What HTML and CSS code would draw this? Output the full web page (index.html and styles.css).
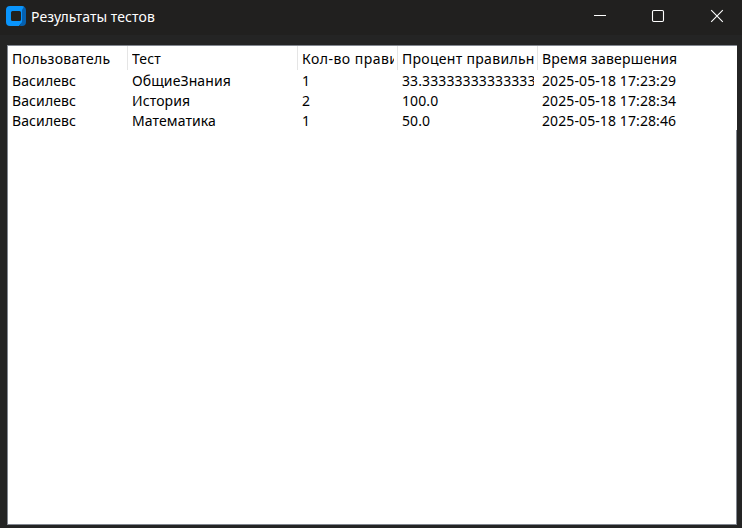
FILE: index.html
```html
<!DOCTYPE html>
<html lang="ru">
<head>
<meta charset="utf-8">
<title>Результаты тестов</title>
<link rel="stylesheet" href="styles.css">
</head>
<body>
<header class="titlebar">
  <svg class="logo" width="20" height="20" viewBox="0 0 20 20">
    <path d="M15 2l3-1.5a4 4 0 0 1 2 3.5v12a4 4 0 0 1-4 4h-2l1-5z" fill="#0560b0"/>
    <path fill-rule="evenodd" d="M4 0h12a4 4 0 0 1 2 .5L16 4v12l-3 4H4a4 4 0 0 1-4-4V4a4 4 0 0 1 4-4zM6.500 5A1.500 1.500 0 0 0 5 6.500v7A1.500 1.500 0 0 0 6.500 15h7a1.500 1.500 0 0 0 1.500-1.500v-7A1.500 1.500 0 0 0 13.500 5z" fill="#0a94fb"/>
  </svg>
  <h1 class="title">Результаты тестов</h1>
  <div class="controls">
    <svg width="58" height="32" viewBox="0 0 58 32"><path d="M23 15.5h12" stroke="#fff"/></svg>
    <svg width="58" height="32" viewBox="0 0 58 32"><rect x="23.5" y="10.5" width="11" height="11" rx="1.2" fill="none" stroke="#fff" stroke-width="1.1"/></svg>
    <svg width="58" height="32" viewBox="0 0 58 32"><path d="M24.2 10.2l11.6 11.6M35.8 10.2L24.2 21.8" stroke="#fff" stroke-width="1.1"/></svg>
  </div>
</header>
<main class="tree">
  <div class="row head">
    <div class="cell"><span class="w-user">Пользователь</span></div>
    <div class="cell"><span>Тест</span></div>
    <div class="cell"><span class="w-count">Кол-во прави</span></div>
    <div class="cell"><span class="w-percent">Процент правильн</span></div>
    <div class="cell"><span class="w-time">Время завершения</span></div>
  </div>
  <div class="row"><span>Василевс</span><span>ОбщиеЗнания</span><span>1</span><span class="clip">33.33333333333333</span><span>2025-05-18 17:23:29</span></div>
  <div class="row"><span>Василевс</span><span>История</span><span>2</span><span>100.0</span><span>2025-05-18 17:28:34</span></div>
  <div class="row"><span>Василевс</span><span>Математика</span><span>1</span><span>50.0</span><span>2025-05-18 17:28:46</span></div>
  <div class="empty"></div>
</main>
</body>
</html>
```
FILE: styles.css
```css
* { box-sizing: border-box; }
body {
  margin: 0;
  height: 528px;
  overflow: hidden;
  background: #242424;
  color: #000;
  font: 14px/20px "Noto Sans", "Open Sans", sans-serif;
}
.titlebar {
  display: flex;
  height: 35px;
  padding-left: 6px;
  background: #21201f;
}
.logo { margin-top: 6px; }
.title {
  margin: 7px 0 0 5px;
  color: #fff;
  font-size: 14px;
  font-weight: 400;
  letter-spacing: .07px;
  white-space: nowrap;
}
.controls { display: flex; margin-left: auto; margin-right: -3px; }
.controls svg { display: block; }
.tree {
  display: flex;
  flex-direction: column;
  width: 730px;
  height: 480px;
  margin: 10px 0 0 7px;
  border: 1px solid #828790;
  border-right: 0;
  background: #fff;
}
.row {
  display: grid;
  grid-template-columns: 120px 170px 100px 140px 1fr;
  height: 20px;
  letter-spacing: .1px;
}
.row > span {
  margin: 0 4px;
  overflow: hidden;
  white-space: nowrap;
}
.head { height: 25px; line-height: 25px; }
.cell {
  height: 24px;
  padding: 0 3px 0 4px;
  border-right: 1px solid #e5e5e5;
}
.cell:last-child { border-right: 0; }
.cell span {
  display: block;
  overflow: hidden;
  white-space: nowrap;
}
.w-user { letter-spacing: .28px; }
.w-count { letter-spacing: .48px; }
.w-percent { letter-spacing: .3px; }
.w-time { letter-spacing: .2px; }
.empty { flex: 1; margin-top: -1px; border-right: 1px solid #828790; }
```
